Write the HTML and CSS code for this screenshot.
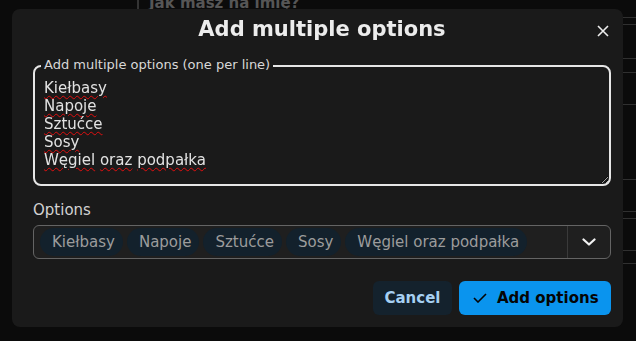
FILE: index.html
```html
<!DOCTYPE html>
<html lang="en">
<head>
    <meta charset="utf-8">
    <title>Add multiple options</title>
    <link rel="stylesheet" href="styles.css">
</head>
<body>
    <div class="page">
        <h2 class="question">Jak masz na imię?</h2>
        <div class="rows">
            <div></div><div></div><div></div><div></div><div></div>
            <div></div><div></div><div></div><div></div><div></div>
        </div>
    </div>

    <div class="overlay">
        <div class="modal">
            <div class="modal-header">
                <h1 class="modal-title">Add multiple options</h1>
                <button class="close" aria-label="Close">
                    <svg width="12" height="12" viewBox="0 0 12 12"><path d="M1 1L11 11M11 1L1 11" stroke="#ededed" stroke-width="1.6" fill="none"/></svg>
                </button>
            </div>

            <div class="bulk">
                <span class="bulk-label">Add multiple options (one per line)</span>
                <div class="bulk-input">
                    <div><span class="typo">Kiełbasy</span></div>
                    <div><span class="typo">Napoje</span></div>
                    <div><span class="typo">Sztućce</span></div>
                    <div><span class="typo">Sosy</span></div>
                    <div><span class="typo">Węgiel</span> <span class="typo">oraz</span> <span class="typo">podpałka</span></div>
                </div>
            </div>

            <div class="options-label">Options</div>
            <div class="select">
                <div class="chips">
                    <span class="chip">Kiełbasy</span>
                    <span class="chip">Napoje</span>
                    <span class="chip">Sztućce</span>
                    <span class="chip">Sosy</span>
                    <span class="chip">Węgiel oraz podpałka</span>
                </div>
                <div class="select-toggle">
                    <svg width="14" height="8" viewBox="0 0 14 8"><path d="M1.5 1.5L7 6.5L12.5 1.5" stroke="#f2f2f2" stroke-width="2.2" fill="none" stroke-linecap="round" stroke-linejoin="round"/></svg>
                </div>
            </div>

            <div class="actions">
                <button class="btn btn-cancel">Cancel</button>
                <button class="btn btn-primary">
                    <svg width="14" height="10" viewBox="0 0 14 10"><path d="M1 5L5 9L13 1" stroke="#050505" stroke-width="1.6" fill="none"/></svg>
                    Add options
                </button>
            </div>
        </div>
    </div>
</body>
</html>
```

FILE: styles.css
```css
* {
    box-sizing: border-box;
    margin: 0;
    padding: 0;
    font-family: "DejaVu Sans", Verdana, sans-serif;
}
body {
    background-color: #0b0b0b;
    color: #e0e0e0;
    width: 636px;
    height: 341px;
    overflow: hidden;
}

/* page behind the dialog */
.page {
    padding-left: 137px;
}
.question {
    border-left: 2px solid #343434;
    padding-left: 10px;
    font-size: 15px;
    line-height: 18px;
    color: #565656;
    margin-top: -6px;
    margin-bottom: 5px;
}
.rows {
    display: grid;
    grid-template-rows: 7px 34px 14px 32px 75px 32px 7px 32px 13px 33px;
}
.rows div {
    border-top: 1px solid #303030;
}

/* dialog */
.overlay {
    position: fixed;
    inset: 0;
    padding: 9px 13px 14px 12px;
}
.modal {
    background-color: #1a1a1a;
    border-radius: 8px;
    height: 318px;
    padding: 0 12px 12px 21px;
    display: flex;
    flex-direction: column;
}
.modal-header {
    position: relative;
    height: 40px;
    display: flex;
    align-items: center;
    justify-content: center;
}
.modal-title {
    font-size: 21px;
    line-height: 24px;
    font-weight: bold;
    color: #ececec;
}
.close {
    position: absolute;
    right: 2px;
    top: 16px;
    width: 12px;
    height: 12px;
    background: none;
    border: none;
    display: flex;
}

.bulk {
    position: relative;
    margin-top: 16px;
}
.bulk-label {
    position: absolute;
    left: 8px;
    top: -8px;
    padding: 0 3px;
    background-color: #1a1a1a;
    font-size: 13px;
    line-height: 15px;
    color: #d8d8d8;
}
.bulk-input {
    height: 121px;
    border: 2px solid #e6e6e6;
    border-radius: 8px;
    padding: 12px 9px;
    font-size: 15px;
    line-height: 18px;
    color: #e2e2e2;
    resize: vertical;
    overflow: auto;
}
.typo {
    text-decoration: underline wavy #e01010;
    text-decoration-thickness: 1px;
    text-underline-offset: 2px;
}

.options-label {
    margin-top: 15px;
    font-size: 15px;
    line-height: 18px;
    color: #d2d2d2;
}
.select {
    margin-top: 6px;
    height: 34px;
    border: 1px solid #646464;
    border-radius: 6px;
    background-color: #1f1f1f;
    display: flex;
}
.chips {
    flex: 1;
    display: flex;
    align-items: center;
    gap: 4px;
    padding-left: 6px;
}
.chip {
    height: 28px;
    line-height: 28px;
    border-radius: 14px;
    background-color: #13212c;
    color: #9c9c9c;
    font-size: 15px;
    padding: 0 8px 0 12px;
    white-space: nowrap;
}
.select-toggle {
    width: 43px;
    border-left: 1px solid #3a3a3a;
    display: flex;
    align-items: center;
    justify-content: center;
}

.actions {
    margin-top: auto;
    display: flex;
    justify-content: flex-end;
    gap: 7px;
}
.btn {
    height: 34px;
    border: none;
    border-radius: 6px;
    font-size: 15px;
    font-weight: bold;
    display: flex;
    align-items: center;
}
.btn-cancel {
    width: 79px;
    justify-content: center;
    background-color: #14222d;
    color: #a6d0f2;
}
.btn-primary {
    width: 152px;
    padding: 0 12px 0 14px;
    gap: 10px;
    background-color: #0a94ee;
    color: #050505;
}
```
